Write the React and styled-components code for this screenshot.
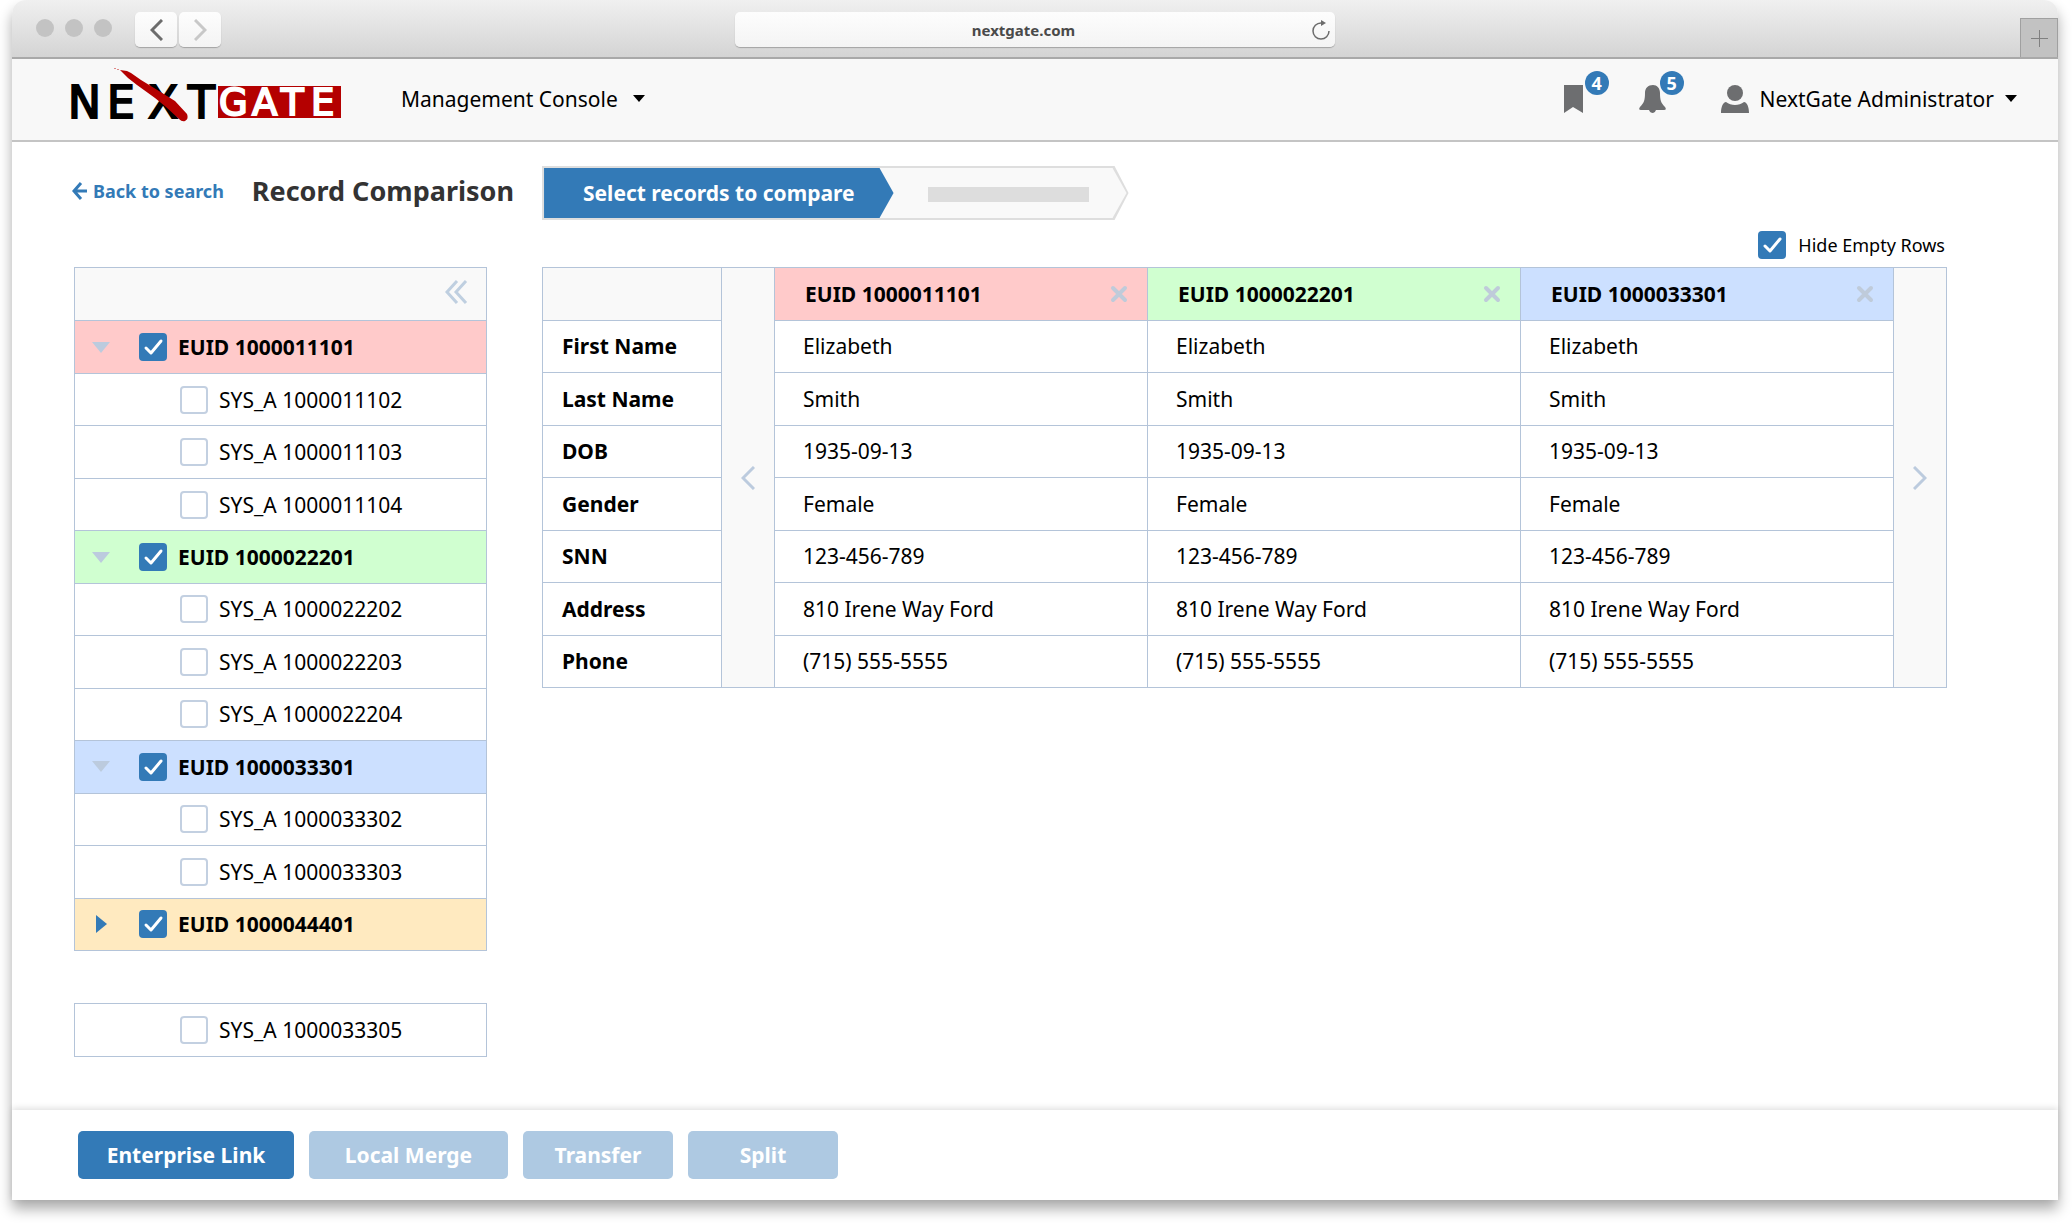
import React, {useState} from 'react';
import styled, {createGlobalStyle, css} from "styled-components";

const colors = {
    blue: '#337ab7',
    line: '#b4c4d9',
    panel: '#f9f9f9',
    icon: '#6d6e70',
    red: '#ffcaca',
    green: '#d0ffd0',
    sky: '#cce0ff',
    sand: '#ffeac0',
};

const GlobalStyle = createGlobalStyle`
  *, *::before, *::after {
    box-sizing: border-box;
  }

  body {
    margin: 0;
    background: #fff;
    color: #000;
    font-family: "Noto Sans", "Open Sans", sans-serif;
    font-size: 21px;
    line-height: 28px;
  }

  button, input {
    margin: 0;
    padding: 0;
    border: 0;
    font: inherit;
    color: inherit;
    background: none;
  }

  svg {
    display: block;
    flex: none;
  }
`;

const Window = styled.div`
  display: flex;
  flex-direction: column;
  min-height: calc(100vh - 24px);
  margin: 0 14px 24px 12px;
  border-radius: 14px 14px 0 0;
  background: #fff;
  box-shadow: 0 9px 14px rgba(0, 0, 0, .33);
`;

const TitleBar = styled.div`
  display: grid;
  grid-template-columns: 1fr minmax(0, 600px) 1fr;
  height: 59px;
  border-bottom: 2px solid #a9a9a9;
  border-radius: 14px 14px 0 0;
  background: linear-gradient(#f0f0f0, #d4d4d4);
`;

const WindowControls = styled.div`
  display: flex;
  align-items: flex-start;
  padding: 12px 0 0 24px;
`;

const Dots = styled.div`
  display: flex;
  gap: 11px;
  margin: 7px 23px 0 0;
`;

const Dot = styled.span`
  width: 18px;
  height: 18px;
  border-radius: 50%;
  background: #c3c3c3;
`;

const raised = css`
  border-radius: 5px;
  background: linear-gradient(#fdfdfd, #f4f4f4);
  box-shadow: 0 1px 1px rgba(0, 0, 0, .25);
`;

const HistoryButton = styled.button`
  ${raised};
  display: flex;
  align-items: center;
  justify-content: center;
  width: 42px;
  height: 35px;
  margin-right: 2px;
  color: ${({$muted}) => $muted ? '#c8c8c8' : '#6c6c6c'};
`;

const AddressBar = styled.div`
  ${raised};
  display: flex;
  align-items: center;
  height: 35px;
  margin-top: 12px;
  padding-right: 5px;
  color: #6c6c6c;
`;

const AddressInput = styled.input`
  flex: 1;
  min-width: 0;
  color: #4a4a4a;
  font-size: 15px;
  font-weight: 700;
  text-align: center;
`;

const NewTab = styled.button`
  display: flex;
  align-items: center;
  justify-content: center;
  align-self: end;
  justify-self: end;
  width: 38px;
  height: 39px;
  border: 1px solid #a0a0a0;
  border-bottom: 0;
  background: #c2c2c2;
`;

const Header = styled.header`
  display: flex;
  align-items: center;
  height: 83px;
  padding: 0 41px 2px 55px;
  border-bottom: 2px solid #c4c4c4;
  background: #f8f8f8;
`;

const HeaderNav = styled.nav`
  margin-left: 60px;
`;

const MenuButton = styled.button`
  display: flex;
  align-items: center;
  gap: ${({$gap}) => $gap}px;
  font-size: 21px;
`;

const HeaderTools = styled.div`
  display: flex;
  align-items: center;
  margin-left: auto;
`;

const IconButton = styled.button`
  position: relative;
  display: flex;
  margin-right: 55px;
  color: ${colors.icon};
`;

const Badge = styled.span`
  position: absolute;
  bottom: 18px;
  left: 21px;
  width: 24px;
  border-radius: 50%;
  background: ${colors.blue};
  color: #fff;
  font-size: 18px;
  font-weight: 700;
  line-height: 24px;
`;

const Main = styled.main`
  flex: 1;
  padding: 24px 111px 0 60px;
`;

const PageHead = styled.div`
  display: flex;
  align-items: center;
`;

const BackLink = styled.a`
  display: flex;
  align-items: center;
  gap: 6px;
  margin-bottom: 4px;
  color: ${colors.blue};
  font-size: 18px;
  font-weight: 700;
  text-decoration: none;
`;

const Title = styled.h1`
  margin: 0 28px 4px;
  color: #333;
  font-size: 27px;
  font-weight: 700;
  line-height: 36px;
`;

const arrowShape = css`
  clip-path: polygon(0 0, calc(100% - 14px) 0, 100% 50%, calc(100% - 14px) 100%, 0 100%);
`;

const Steps = styled.div`
  ${arrowShape};
  padding: 2px;
  background: #dedede;
`;

const StepTrack = styled.div`
  ${arrowShape};
  display: flex;
  align-items: center;
  height: 50px;
  background: #f9f9f9;
`;

const ActiveStep = styled.div`
  ${arrowShape};
  padding: 0 39px;
  background: ${colors.blue};
  color: #fff;
  font-weight: 700;
  line-height: 50px;
`;

const PendingStep = styled.div`
  width: 161px;
  height: 15px;
  margin: 2px 38px 0 34px;
  background: #ddd;
`;

const Workspace = styled.div`
  display: flex;
  align-items: flex-start;
  gap: 55px;
  margin-left: 2px;
`;

const Tree = styled.div`
  flex: none;
  width: 413px;
  margin-top: 47px;
`;

// rows share the height of the list evenly
const TreeRows = styled.ul`
  display: grid;
  grid-auto-rows: 1fr;
  min-height: ${({$height}) => $height}px;
  margin: 0 0 52px;
  padding: 0;
  border: 1px solid ${colors.line};
  list-style: none;
`;

const TreeRow = styled.li`
  display: flex;
  align-items: center;
  padding-left: ${({$child}) => $child ? 105 : 17}px;
  background: ${({$tint}) => $tint ?? '#fff'};
  font-weight: ${({$child}) => $child ? 400 : 700};

  & + & {
    border-top: 1px solid ${colors.line};
  }
`;

const CollapseButton = styled.button`
  margin: 0 18px 4px auto;
  color: #bfcfe0;
`;

const Toggle = styled.button`
  display: flex;
  justify-content: center;
  width: 18px;
  margin-right: 29px;
  color: ${({$open}) => $open ? '#bccbde' : colors.blue};
`;

const CheckLabel = styled.label`
  display: flex;
  align-items: center;
  gap: ${({$small}) => $small ? 12 : 11}px;
  font-size: ${({$small}) => $small ? 18 : 21}px;
`;

const CheckBox = styled.span`
  position: relative;
  width: 28px;
  height: 28px;

  input {
    display: block;
    width: 28px;
    height: 28px;
    appearance: none;
    border: 2px solid #c3d0e1;
    border-radius: 4px;
    background: #fff;
  }

  input:checked {
    border: 0;
    background: ${colors.blue};
  }

  svg {
    position: absolute;
    inset: 0;
    pointer-events: none;
  }
`;

const Compare = styled.section`
  flex: 1;
  min-width: 0;
`;

const Options = styled.div`
  display: flex;
  justify-content: flex-end;
  padding: 11px 2px 8px 0;
`;

const CompareTable = styled.table`
  width: 100%;
  height: 421px;
  border-collapse: collapse;
  table-layout: fixed;

  th, td {
    padding: 0;
    border: 1px solid ${colors.line};
    text-align: left;
  }
`;

const LabelCol = styled.col`
  width: 179px;
`;

const PagerCol = styled.col`
  width: 53px;
`;

const FieldName = styled.th`
  && {
    padding-left: 19px;
  }
`;

const Value = styled.td`
  && {
    padding-left: 28px;
  }
`;

const Corner = styled.td`
  background: ${colors.panel};
`;

const RecordHead = styled.th`
  background: ${({$tint}) => $tint};

  div {
    display: flex;
    align-items: center;
    justify-content: space-between;
    padding: 0 19px 0 30px;
  }

  button {
    color: #bfcbda;
  }
`;

const Pager = styled.td`
  background: ${colors.panel};

  button {
    display: flex;
    align-items: center;
    justify-content: center;
    width: 100%;
    color: #bccbde;
  }
`;

const Footer = styled.footer`
  display: flex;
  gap: 15px;
  padding: 21px 66px;
  background: #fff;
  box-shadow: 0 -2px 6px rgba(0, 0, 0, .12);
`;

const ActionButton = styled.button`
  min-width: ${({$width}) => $width}px;
  height: 48px;
  border-radius: 5px;
  background: ${colors.blue};
  color: #fff;
  font-weight: 700;

  &:disabled {
    background: #aec9e2;
  }
`;

const Logo = () => (
    <svg width="274" height="62" viewBox="-4 0 274 62" role="img" aria-label="NextGate">
        <g fontFamily='"DejaVu Sans", sans-serif'>
            <text x="-3 36 77 117" y="50" fontSize="44" stroke="#000" strokeWidth="2">NEXT</text>
            <rect x="147" y="18" width="123" height="32" fill="#b40000"/>
            <text x="148 181 210 240" y="47" fontSize="37" fill="#fff" stroke="#fff" strokeWidth="2">GATE</text>
        </g>
        <path
            d="M49 2L56 3L60 5L70 12L88 23L104 33L116 46Q118 51 114 53Q111 54 108 51L95 39L84 30L66 17L57 10Z"
            fill="#b40000"
        />
        <path d="M43 0h2v1h-2zM46 1h2v1h-2z" fill="#d88"/>
    </svg>
);

const Chevron = ({left, width, height, stroke}) => (
    <svg width={width} height={height} fill="none" stroke="currentColor" strokeWidth={stroke}>
        <path d={left
            ? `M${width - 1} 1L2 ${height / 2}L${width - 1} ${height - 1}`
            : `M1 1L${width - 2} ${height / 2}L1 ${height - 1}`}/>
    </svg>
);

const Caret = () => (
    <svg width="12" height="7"><path d="M0 0H12L6 7Z" fill="currentColor"/></svg>
);

const Check = ({label, small, defaultChecked = false}) => {
    const [checked, setChecked] = useState(defaultChecked);
    return (
        <CheckLabel $small={small}>
            <CheckBox>
                <input type="checkbox" checked={checked} onChange={(e) => setChecked(e.target.checked)}/>
                {checked && (
                    <svg width="28" height="28" fill="none" stroke="#fff" strokeWidth="3" strokeLinecap="round" strokeLinejoin="round">
                        <path d="M7 15L12 20L22 8"/>
                    </svg>
                )}
            </CheckBox>
            {label}
        </CheckLabel>
    );
};

const groups = [
    {id: '1000011101', tint: colors.red, open: true, items: ['1000011102', '1000011103', '1000011104']},
    {id: '1000022201', tint: colors.green, open: true, items: ['1000022202', '1000022203', '1000022204']},
    {id: '1000033301', tint: colors.sky, open: true, items: ['1000033302', '1000033303']},
    {id: '1000044401', tint: colors.sand, open: false, items: []},
];

const fields = [
    ['First Name', 'Elizabeth'],
    ['Last Name', 'Smith'],
    ['DOB', '1935-09-13'],
    ['Gender', 'Female'],
    ['SNN', '123-456-789'],
    ['Address', '810 Irene Way Ford'],
    ['Phone', '(715) 555-5555'],
];

const records = groups.slice(0, 3);

const BrowserBar = () => (
    <TitleBar>
        <WindowControls>
            <Dots><Dot/><Dot/><Dot/></Dots>
            <HistoryButton aria-label="Back"><Chevron left width={13} height={22} stroke={3}/></HistoryButton>
            <HistoryButton $muted aria-label="Forward"><Chevron width={13} height={22} stroke={3}/></HistoryButton>
        </WindowControls>
        <AddressBar>
            <AddressInput aria-label="Address" defaultValue="nextgate.com"/>
            <svg width="18" height="20" fill="none" stroke="currentColor" strokeWidth="1.5">
                <path d="M9 3A8 8 0 1 0 17 11"/>
                <path d="M9 0L14 3L9 6Z" fill="currentColor" stroke="none"/>
            </svg>
        </AddressBar>
        <NewTab aria-label="New tab">
            <svg width="17" height="17" stroke="#808080" strokeWidth="1"><path d="M8.5 0V17M0 8.5H17"/></svg>
        </NewTab>
    </TitleBar>
);

const AppHeader = () => (
    <Header>
        <Logo/>
        <HeaderNav>
            <MenuButton $gap={15} aria-haspopup="menu">Management Console <Caret/></MenuButton>
        </HeaderNav>
        <HeaderTools>
            <IconButton aria-label="Bookmarks">
                <svg width="20" height="28"><path d="M0 0H19V28L9 22L0 28Z" fill="currentColor"/></svg>
                <Badge>4</Badge>
            </IconButton>
            <IconButton aria-label="Notifications">
                <svg width="27" height="28" fill="currentColor">
                    <path d="M14 0C9 0 6 3 6 8C6 15 5 18 1 22Q-1 25 2 25H10Q11 28 14 28Q16 28 17 25H25Q28 25 26 22C22 18 21 15 21 8C21 3 18 0 14 0Z"/>
                </svg>
                <Badge>5</Badge>
            </IconButton>
            <MenuButton $gap={11} aria-haspopup="menu">
                <svg width="28" height="28" fill={colors.icon}>
                    <circle cx="14" cy="8" r="8"/>
                    <path d="M0 28C0 22 2 17 5 17C10 21 18 21 23 17C26 17 28 22 28 28Z"/>
                </svg>
                NextGate Administrator
                <Caret/>
            </MenuButton>
        </HeaderTools>
    </Header>
);

const RecordTree = () => (
    <Tree>
        <TreeRows $height={684}>
            <TreeRow $tint={colors.panel}>
                <CollapseButton aria-label="Collapse">
                    <svg width="23" height="24" fill="none" stroke="currentColor" strokeWidth="3">
                        <path d="M12 1L2 12L12 23M21 1L11 12L21 23"/>
                    </svg>
                </CollapseButton>
            </TreeRow>
            {groups.map(({id, tint, open, items}) => (
                <React.Fragment key={id}>
                    <TreeRow $tint={tint}>
                        <Toggle $open={open} aria-label={open ? 'Close group' : 'Open group'}>
                            {open
                                ? <svg width="18" height="11"><path d="M0 0H18L9 11Z" fill="currentColor"/></svg>
                                : <svg width="11" height="18"><path d="M0 0V18L11 9Z" fill="currentColor"/></svg>}
                        </Toggle>
                        <Check label={`EUID ${id}`} defaultChecked/>
                    </TreeRow>
                    {items.map((item) => (
                        <TreeRow key={item} $child><Check label={`SYS_A ${item}`}/></TreeRow>
                    ))}
                </React.Fragment>
            ))}
        </TreeRows>
        <TreeRows $height={54}>
            <TreeRow $child><Check label="SYS_A 1000033305"/></TreeRow>
        </TreeRows>
    </Tree>
);

const RecordTable = () => (
    <Compare>
        <Options><Check small label="Hide Empty Rows" defaultChecked/></Options>
        <CompareTable>
            <colgroup>
                <LabelCol/>
                <PagerCol/>
                {records.map(({id}) => <col key={id}/>)}
                <PagerCol/>
            </colgroup>
            <tbody>
                <tr>
                    <Corner/>
                    <Pager rowSpan={8}>
                        <button aria-label="Previous records"><Chevron left width={14} height={24} stroke={3}/></button>
                    </Pager>
                    {records.map(({id, tint}) => (
                        <RecordHead key={id} $tint={tint} scope="col">
                            <div>
                                EUID {id}
                                <button aria-label={`Remove ${id}`}>
                                    <svg width="18" height="18" stroke="currentColor" strokeWidth="4" strokeLinecap="round">
                                        <path d="M3 3L15 15M15 3L3 15"/>
                                    </svg>
                                </button>
                            </div>
                        </RecordHead>
                    ))}
                    <Pager rowSpan={8}>
                        <button aria-label="Next records"><Chevron width={14} height={24} stroke={3}/></button>
                    </Pager>
                </tr>
                {fields.map(([name, value]) => (
                    <tr key={name}>
                        <FieldName scope="row">{name}</FieldName>
                        {records.map(({id}) => <Value key={id}>{value}</Value>)}
                    </tr>
                ))}
            </tbody>
        </CompareTable>
    </Compare>
);

const App = () => {
    return (
        <>
            <GlobalStyle/>
            <Window>
                <BrowserBar/>
                <AppHeader/>
                <Main>
                    <PageHead>
                        <BackLink href="#search">
                            <svg width="15" height="18" fill="none" stroke="currentColor" strokeWidth="3">
                                <path d="M9 1L2 9L9 17M2 9H15"/>
                            </svg>
                            Back to search
                        </BackLink>
                        <Title>Record Comparison</Title>
                        <Steps>
                            <StepTrack>
                                <ActiveStep>Select records to compare</ActiveStep>
                                <PendingStep/>
                            </StepTrack>
                        </Steps>
                    </PageHead>
                    <Workspace>
                        <RecordTree/>
                        <RecordTable/>
                    </Workspace>
                </Main>
                <Footer>
                    <ActionButton $width={216}>Enterprise Link</ActionButton>
                    <ActionButton $width={199} disabled>Local Merge</ActionButton>
                    <ActionButton $width={150} disabled>Transfer</ActionButton>
                    <ActionButton $width={150} disabled>Split</ActionButton>
                </Footer>
            </Window>
        </>
    );
};

export default App;
